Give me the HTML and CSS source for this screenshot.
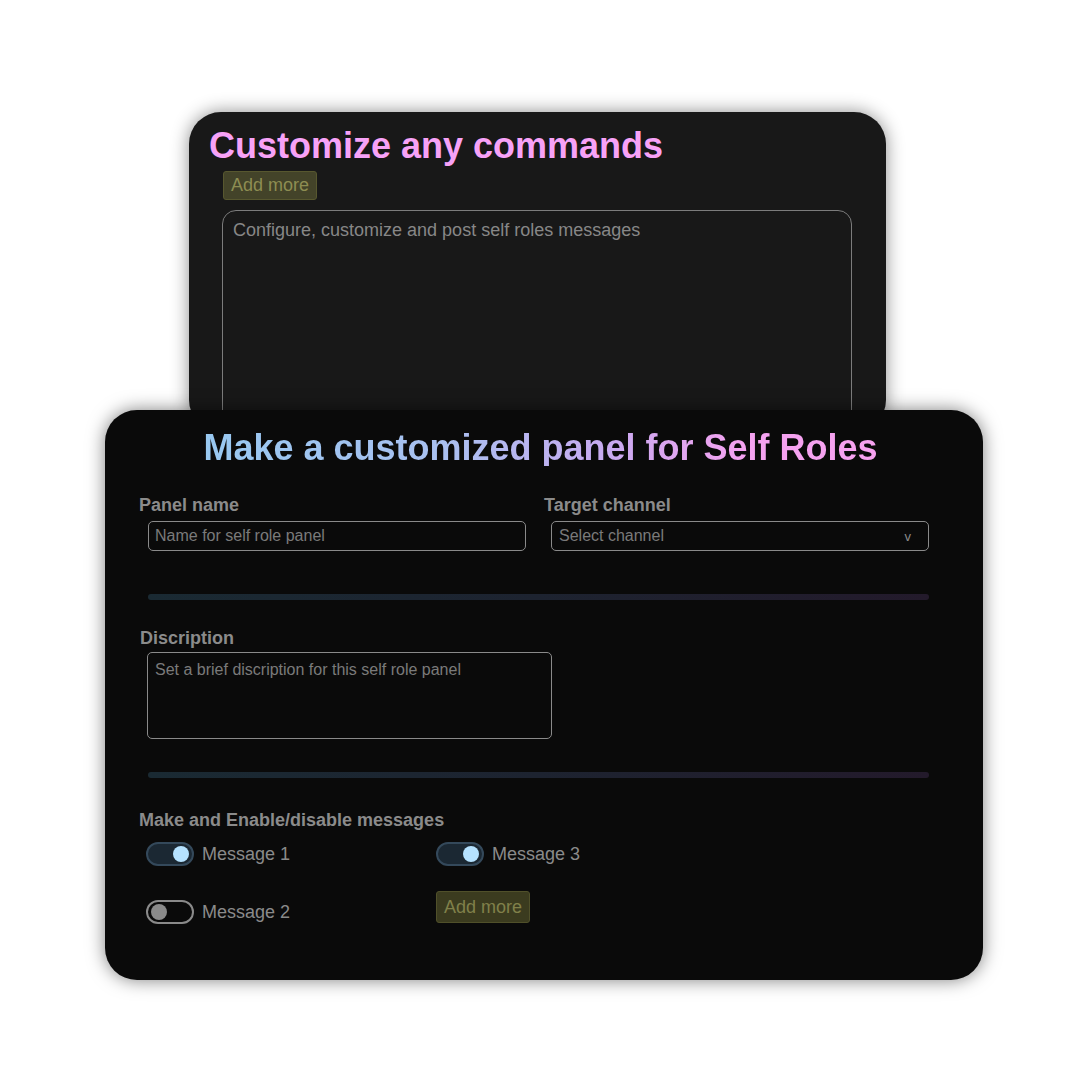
FILE: index.html
```html
<!DOCTYPE html>
<html lang="en">
<head>
<meta charset="utf-8">
<title>Self Roles</title>
<link rel="stylesheet" href="styles.css">
</head>
<body>
<div class="stage">
  <section class="back-card">
    <h2 class="back-title">Customize any commands</h2>
    <button class="btn-add back-add" type="button">Add more</button>
    <textarea class="back-area" placeholder="Configure, customize and post self roles messages"></textarea>
  </section>

  <section class="front-card">
    <h1 class="front-title"><span class="grad">Make a customized panel for Self Roles</span></h1>

    <div class="fields">
      <div class="field">
        <div class="label">Panel name</div>
        <input class="input input-left" type="text" placeholder="Name for self role panel">
      </div>
      <div class="field">
        <div class="label">Target channel</div>
        <div class="input input-right select">
          <span class="ph">Select channel</span>
          <span class="caret">v</span>
        </div>
      </div>
    </div>

    <div class="divider divider-1"></div>

    <div class="desc">
      <div class="label label-desc">Discription</div>
      <textarea class="desc-area" placeholder="Set a brief discription for this self role panel"></textarea>
    </div>

    <div class="divider divider-2"></div>

    <div class="label label-msgs">Make and Enable/disable messages</div>
    <div class="toggles">
      <div class="col col-1">
        <div class="toggle-item">
          <span class="toggle on"><span class="knob"></span></span>
          <span class="msg">Message 1</span>
        </div>
        <div class="toggle-item">
          <span class="toggle off"><span class="knob"></span></span>
          <span class="msg">Message 2</span>
        </div>
      </div>
      <div class="col col-2">
        <div class="toggle-item">
          <span class="toggle on"><span class="knob"></span></span>
          <span class="msg">Message 3</span>
        </div>
        <button class="btn-add front-add" type="button">Add more</button>
      </div>
    </div>
  </section>
</div>
</body>
</html>
```

FILE: styles.css
```css
* {
  box-sizing: border-box;
}

html, body {
  margin: 0;
  background: #ffffff;
}

body {
  font-family: "Liberation Sans", Arial, Helvetica, sans-serif;
  width: 1080px;
  height: 1080px;
  overflow: hidden;
}

.stage {
  padding-top: 112px;
  display: flex;
  flex-direction: column;
  align-items: flex-start;
}

/* ---------- back card ---------- */
.back-card {
  position: relative;
  z-index: 0;
  margin-left: 189px;
  width: 697px;
  height: 320px;
  padding: 16px 20px 0;
  background: #181818;
  border-radius: 32px;
  box-shadow: 0 0 18px rgba(0, 0, 0, 0.45);
  display: flex;
  flex-direction: column;
  align-items: flex-start;
  overflow: hidden;
}

.back-title {
  margin: 0;
  font-size: 36px;
  line-height: 36px;
  font-weight: 700;
  color: #f7a2f7;
}

.btn-add {
  width: 94px;
  font-family: "Liberation Sans", Arial, sans-serif;
  font-size: 18px;
  padding: 0;
  border-radius: 3px;
  cursor: pointer;
}

.back-add {
  margin-top: 7px;
  margin-left: 14px;
  height: 31px;
  background: #434329;
  border: 1px solid #57572f;
  color: #8d8d52;
}

.back-area {
  margin-top: 10px;
  margin-left: 13px;
  width: 630px;
  height: 240px;
  padding: 9px 10px;
  border: 1px solid #7c7c7c;
  border-radius: 14px;
  background: transparent;
  resize: none;
  font-family: "Liberation Sans", Arial, sans-serif;
  font-size: 18px;
  line-height: 21px;
  color: #8a8a8a;
}

.back-area::placeholder {
  color: #878787;
}

/* ---------- front card ---------- */
.front-card {
  position: relative;
  z-index: 1;
  margin-left: 105px;
  margin-top: -22px;
  width: 878px;
  height: 570px;
  padding: 20px 34px 0;
  background: #0a0a0a;
  border-radius: 32px;
  box-shadow: 0 0 18px rgba(0, 0, 0, 0.5);
}

.front-title {
  margin: 0;
  padding-right: 7px;
  text-align: center;
  font-size: 36px;
  line-height: 36px;
  font-weight: 700;
}

.grad {
  display: inline-block;
  background: linear-gradient(90deg, #98c8f0 0%, #a8c0f0 35%, #c8aaf0 60%, #f4a2f0 80%, #f7a2f0 100%);
  -webkit-background-clip: text;
  background-clip: text;
  color: transparent;
}

.label {
  font-size: 18px;
  line-height: 21px;
  font-weight: 700;
  color: #8b8b8b;
}

.fields {
  margin-top: 29px;
  display: grid;
  grid-template-columns: 405px 1fr;
}

.input {
  display: block;
  margin-top: 5px;
  width: 378px;
  height: 30px;
  padding: 0 6px;
  border: 1px solid #8a8a8a;
  border-radius: 5px;
  background: transparent;
  font-family: "Liberation Sans", Arial, sans-serif;
  font-size: 16px;
  color: #8a8a8a;
  outline: none;
}

.input::placeholder {
  color: #7a7a7a;
}

.input-left {
  margin-left: 9px;
}

.input-right {
  margin-left: 7px;
}

.select {
  display: flex;
  align-items: center;
  justify-content: space-between;
  padding: 0 17px 0 7px;
}

.ph {
  color: #7a7a7a;
}

.caret {
  font-size: 13px;
  color: #8a8a8a;
}

.divider {
  margin-left: 9px;
  width: 781px;
  height: 6px;
  border-radius: 3px;
  background: linear-gradient(90deg, #1a2a33 0%, #1d2330 50%, #231a2b 100%);
}

.divider-1 {
  margin-top: 43px;
}

.desc {
  margin-top: 28px;
  display: flex;
  flex-direction: column;
  align-items: flex-start;
}

.label-desc {
  margin-left: 1px;
}

.desc-area {
  margin-top: 3px;
  margin-left: 8px;
  width: 405px;
  height: 87px;
  padding: 7px 7px;
  border: 1px solid #8a8a8a;
  border-radius: 5px;
  background: transparent;
  resize: none;
  font-family: "Liberation Sans", Arial, sans-serif;
  font-size: 16px;
  line-height: 19px;
  color: #8a8a8a;
}

.desc-area::placeholder {
  color: #7a7a7a;
}

.divider-2 {
  margin-top: 33px;
}

.label-msgs {
  margin-top: 32px;
}

.toggles {
  margin-top: 11px;
  margin-left: 7px;
  display: flex;
}

.col {
  display: flex;
  flex-direction: column;
  align-items: flex-start;
}

.col-1 {
  width: 290px;
  gap: 34px;
}

.col-2 {
  gap: 25px;
}

.toggle-item {
  display: flex;
  align-items: center;
  gap: 8px;
  height: 24px;
}

.toggle {
  width: 48px;
  height: 24px;
  border-radius: 12px;
  border: 2px solid #8a8a8a;
  padding: 0 3px;
  display: flex;
  align-items: center;
}

.knob {
  width: 16px;
  height: 16px;
  border-radius: 50%;
  background: #8a8a8a;
}

.toggle.on {
  background: #1b2833;
  border-color: #34495b;
  justify-content: flex-end;
}

.toggle.on .knob {
  background: #b5e2ff;
}

.toggle.off {
  justify-content: flex-start;
}

.msg {
  font-size: 18px;
  line-height: 21px;
  color: #8a8a8a;
}

.front-add {
  height: 32px;
  background: #3b3b1f;
  border: 1px solid #50502a;
  color: #80804a;
}
```
